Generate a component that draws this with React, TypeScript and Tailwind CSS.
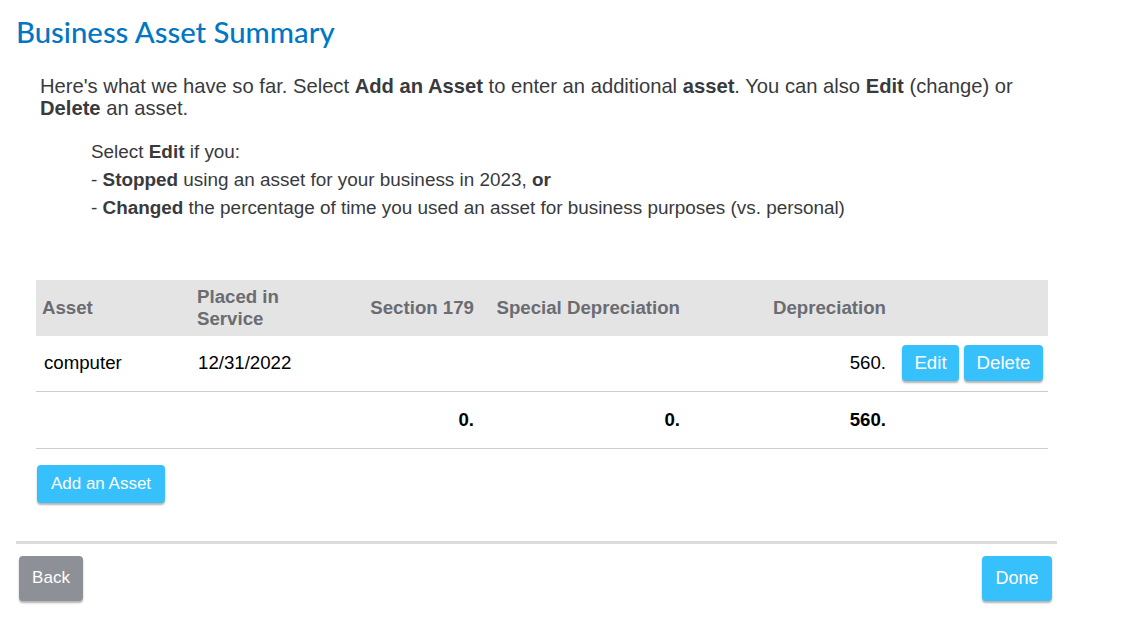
const assets = [
  { name: "computer", placed: "12/31/2022", section179: "", special: "", depreciation: "560." },
];

function BlueButton({ children, className = "" }: { children: React.ReactNode; className?: string }) {
  return (
    <button
      className={`rounded-[4px] bg-[#36c0fc] text-white shadow-[0_2px_2px_rgba(0,0,0,0.3)] ${className}`}
    >
      {children}
    </button>
  );
}

export default function App() {
  return (
    <div className="min-h-screen bg-white font-['Liberation_Sans',Arial,sans-serif] text-[#393a3d]">
      <div className="ml-4 w-[1041px]">
        <h1 className="mt-[14px] font-['Lato',sans-serif] text-[29.3px] font-medium leading-[36px] text-[#0077c5]">
          Business Asset Summary
        </h1>

        <div className="mt-[25px] pl-6 pr-4">
          <p className="text-[20.2px] leading-[22px]">
            Here's what we have so far. Select <b>Add an Asset</b> to enter an additional <b>asset</b>. You can
            also <b>Edit</b> (change) or <b>Delete</b> an asset.
          </p>
          <div className="mt-[19px] pl-[51px] text-[18.9px] leading-[28px]">
            <div>
              Select <b>Edit</b> if you:
            </div>
            <div>
              - <b>Stopped</b> using an asset for your business in 2023, <b>or</b>
            </div>
            <div>
              - <b>Changed</b> the percentage of time you used an asset for business purposes (vs. personal)
            </div>
          </div>
        </div>

        <table className="mt-[58px] ml-5 w-[1012px] table-fixed border-collapse text-[18.67px]">
          <colgroup>
            <col className="w-[155px]" />
            <col className="w-[164px]" />
            <col className="w-[125px]" />
            <col className="w-[206px]" />
            <col className="w-[206px]" />
            <col className="w-[156px]" />
          </colgroup>
          <thead>
            <tr className="h-[56px] bg-[#e4e4e4] font-bold leading-[22px] text-[#6b6c72]">
              <th className="pl-[6px] text-left align-middle">Asset</th>
              <th className="pl-[6px] text-left align-middle">
                Placed in
                <br />
                Service
              </th>
              <th className="pr-[6px] text-right align-middle">Section 179</th>
              <th className="pr-[6px] text-right align-middle">Special Depreciation</th>
              <th className="pr-[6px] text-right align-middle">Depreciation</th>
              <th />
            </tr>
          </thead>
          <tbody className="text-black">
            {assets.map((a) => (
              <tr key={a.name} className="h-[55px] border-b border-[#cccccc]">
                <td className="pl-2 align-middle">{a.name}</td>
                <td className="pl-[7px] align-middle">{a.placed}</td>
                <td className="pr-[6px] text-right align-middle">{a.section179}</td>
                <td className="pr-[6px] text-right align-middle">{a.special}</td>
                <td className="pr-[6px] text-right align-middle">{a.depreciation}</td>
                <td className="pl-[10px] align-middle">
                  <div className="flex gap-[5px]">
                    <BlueButton className="h-[36px] w-[57px] text-[18.67px]">Edit</BlueButton>
                    <BlueButton className="h-[36px] w-[79px] text-[18.67px]">Delete</BlueButton>
                  </div>
                </td>
              </tr>
            ))}
            <tr className="h-[57px] border-b border-[#cccccc] font-bold">
              <td />
              <td />
              <td className="pr-[6px] text-right align-middle">0.</td>
              <td className="pr-[6px] text-right align-middle">0.</td>
              <td className="pr-[6px] text-right align-middle">560.</td>
              <td />
            </tr>
          </tbody>
        </table>

        <div className="mt-4 ml-[21px]">
          <BlueButton className="h-[38px] w-[128px] text-[17px]">Add an Asset</BlueButton>
        </div>

        <div className="mt-[38px] h-[3px] bg-[#dcdcdc]" />

        <div className="mt-3 flex justify-between pl-[3px] pr-[5px]">
          <button className="h-[45px] w-[64px] rounded-[4px] bg-[#8d9096] text-[17px] text-white shadow-[0_2px_2px_rgba(0,0,0,0.3)]">
            Back
          </button>
          <BlueButton className="h-[45px] w-[70px] text-[18px]">Done</BlueButton>
        </div>
      </div>
    </div>
  );
}
